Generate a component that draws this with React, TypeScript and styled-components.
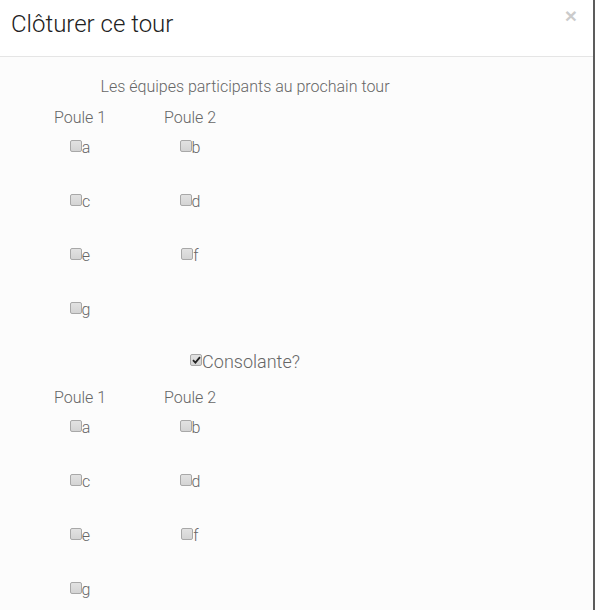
import React from "react";
import styled, { createGlobalStyle } from "styled-components";

const Global = createGlobalStyle`
  html, body { margin: 0; padding: 0; background: #fff; }
  body { font-family: Roboto, "Liberation Sans", sans-serif; }
`;

const Modal = styled.div`
  width: 593px;
  height: 610px;
  border-right: 2px solid #5c5c5c;
  background: #fcfcfc;
  overflow: hidden;
`;

const Header = styled.div`
  position: relative;
  height: 57px;
  box-sizing: border-box;
  border-bottom: 1px solid #e5e5e5;
  background: #fff;
  padding: 8px 11px 0;
`;

const Title = styled.h4`
  margin: 0;
  font-size: 24px;
  font-weight: 300;
  color: #212121;
  line-height: 32px;
`;

const Close = styled.button`
  position: absolute;
  top: 5px;
  right: 16px;
  border: 0;
  background: none;
  padding: 0;
  font-family: "Liberation Sans", sans-serif;
  font-size: 21px;
  font-weight: bold;
  color: #000;
  opacity: 0.2;
  line-height: 21px;
`;

const Body = styled.div`
  width: 490px;
  padding-top: 20px;
  color: #666;
  font-weight: 300;
`;

const Caption = styled.div`
  text-align: center;
  font-size: 16px;
  line-height: 20px;
`;

const Grid = styled.div`
  display: grid;
  grid-template-columns: 110px 110px;
  padding-left: 25px;
  margin-top: 12px;
`;

const Column = styled.div`
  display: flex;
  flex-direction: column;
  align-items: center;
`;

const ColTitle = styled.div`
  font-size: 16px;
  line-height: 18px;
  height: 29px;
`;

const Item = styled.label<{ $last?: boolean }>`
  display: flex;
  align-items: center;
  height: 18px;
  margin-bottom: ${(p) => (p.$last ? 0 : 36)}px;
  font-size: 16px;
`;

const Box = styled.span<{ $checked?: boolean }>`
  display: inline-flex;
  align-items: center;
  justify-content: center;
  width: 10px;
  height: 10px;
  border: 1px solid #a8a8a8;
  border-radius: 2px;
  background: linear-gradient(#e2e2e2, #d4d4d4);
  margin-top: -2px;
`;

const Toggle = styled.label`
  display: flex;
  justify-content: center;
  align-items: center;
  font-size: 18px;
  height: 20px;
  margin: 33px 0 18px;
`;

const Check = ({ checked }: { checked?: boolean }) => (
  <Box $checked={checked}>
    {checked && (
      <svg width="9" height="8" viewBox="0 0 9 8">
        <path d="M1 4.2 L3.4 6.6 L8 1.2" stroke="#222" strokeWidth="1.8" fill="none" />
      </svg>
    )}
  </Box>
);

const Section = () => (
  <Grid>
    <Column>
      <ColTitle>Poule 1</ColTitle>
      {["a", "c", "e", "g"].map((t, i) => (
        <Item key={t} $last={i === 3}>
          <Check />
          {t}
        </Item>
      ))}
    </Column>
    <Column>
      <ColTitle>Poule 2</ColTitle>
      {["b", "d", "f"].map((t) => (
        <Item key={t}>
          <Check />
          {t}
        </Item>
      ))}
    </Column>
  </Grid>
);

export default function App() {
  return (
    <>
      <Global />
      <Modal>
        <Header>
          <Title>Clôturer ce tour</Title>
          <Close>×</Close>
        </Header>
        <Body>
          <Caption>Les équipes participants au prochain tour</Caption>
          <Section />
          <Toggle>
            <Check checked />
            Consolante?
          </Toggle>
          <Section />
        </Body>
      </Modal>
    </>
  );
}
